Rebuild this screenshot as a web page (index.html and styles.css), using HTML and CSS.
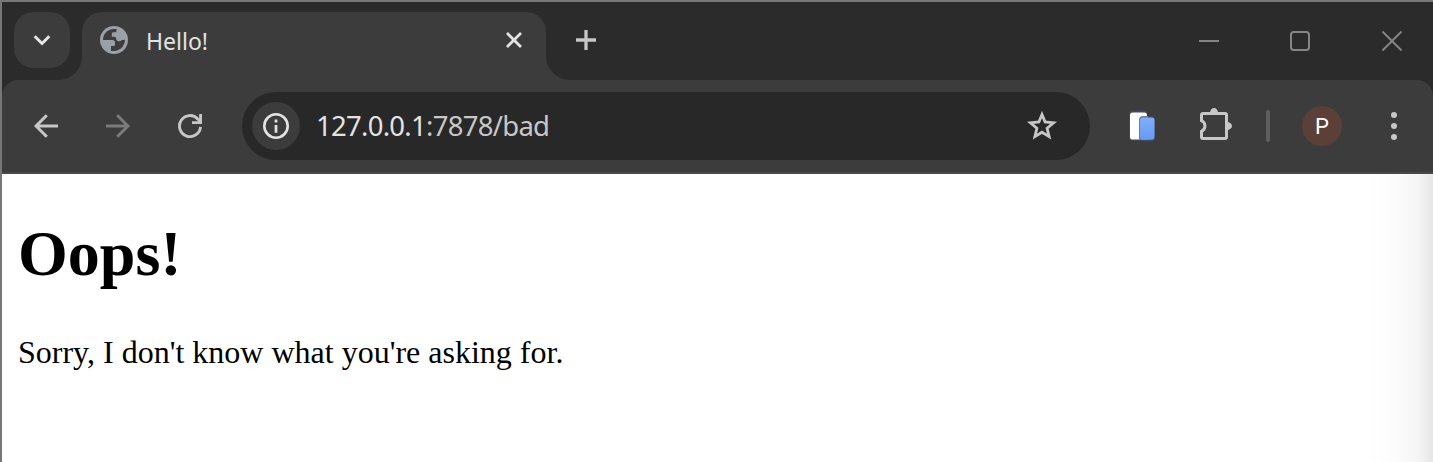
FILE: index.html
```html
<!DOCTYPE html>
<html lang="en">
<head>
<meta charset="utf-8">
<title>Hello!</title>
<link rel="stylesheet" href="styles.css">
</head>
<body>
<div class="window">
  <header class="tabstrip">
    <div class="tab-search">
      <svg width="20" height="14" viewBox="0 0 20 14"><path d="M2.7 3.2 10 10.5 17.3 3.2" fill="none" stroke="#e6e6e6" stroke-width="3"/></svg>
    </div>
    <div class="tab">
      <svg class="favicon" width="28" height="28" viewBox="0 0 28 28"><circle cx="14" cy="14" r="14" fill="#9aa0a6"/><path d="M3 14C3 7.5 8 3 14 3H16.5V5Q16.5 6.3 15 6.3H13Q11.8 6.3 11.8 8V10.8H14Q16.3 10.8 16.3 13V14Q18 15.6 20 15.2Q21.8 13.8 24.9 13.8C25 20 20 25 14 25H11V20H13.5Q15 20 15 18.5V16.5Q15 14 12.2 14Z" fill="#3c3c3c"/></svg>
      <span class="tab-title">Hello!</span>
      <svg class="tab-close" width="18" height="18" viewBox="0 0 18 18"><path d="M2 2 16 16M16 2 2 16" stroke="#e3e3e3" stroke-width="2.8"/></svg>
    </div>
    <svg class="new-tab" width="20" height="20" viewBox="0 0 20 20"><path d="M10 0V20M0 10H20" stroke="#c7c7c7" stroke-width="3.3"/></svg>
    <div class="controls">
      <svg width="20" height="20" viewBox="0 0 20 20"><path d="M0 10H20" stroke="#858585" stroke-width="2"/></svg>
      <svg width="20" height="20" viewBox="0 0 20 20"><rect x="1" y="1" width="18" height="18" rx="2.8" fill="none" stroke="#858585" stroke-width="2"/></svg>
      <svg class="window-close" width="20" height="20" viewBox="0 0 20 20"><path d="M.5.5 19.5 19.5M19.5.5.5 19.5" stroke="#858585" stroke-width="2"/></svg>
    </div>
  </header>
  <nav class="toolbar">
    <svg class="back" width="24" height="24" viewBox="0 0 24 24"><path d="M24 12H2.5M12.8 1.2 2 12 12.8 22.8" fill="none" stroke="#c7c7c7" stroke-width="3"/></svg>
    <svg class="forward" width="24" height="24" viewBox="0 0 24 24"><path d="M0 12H21.5M11.2 1.2 22 12 11.2 22.8" fill="none" stroke="#7b7b7b" stroke-width="3"/></svg>
    <svg class="reload" width="24" height="24" viewBox="0 0 24 24"><path d="M22.5 12.8A10.5 10.5 0 1 1 19.8 5L22.3 7.5M22.6 0V8.6H14" fill="none" stroke="#c7c7c7" stroke-width="2.9"/></svg>
    <div class="omnibox">
      <span class="site-info"><svg width="26" height="26" viewBox="0 0 26 26"><circle cx="13" cy="13" r="11.7" fill="none" stroke="#e3e3e3" stroke-width="2.6"/><path d="M13 12V19.7M13 6.6V9.4" stroke="#e3e3e3" stroke-width="2.7"/></svg></span>
      <span class="url"><span class="host">127.0.0.1</span>:7878/bad</span>
      <svg class="star" width="32" height="30" viewBox="0 0 32 30"><path d="M16 3.5 19.1 11 27.6 11.8 21.1 17.3 23.1 25.6 16 21.2 8.9 25.6 10.9 17.3 4.4 11.8 12.9 11Z" fill="none" stroke="#c7c7c7" stroke-width="2.8"/></svg>
    </div>
    <svg class="extension" width="28" height="34" viewBox="0 0 28 34"><rect x="1" y="2.5" width="18" height="30" rx="4" fill="#414962"/><rect x="11" y="8" width="16" height="25.5" rx="4" fill="#414962"/><rect x="2" y="4.4" width="17" height="27.2" rx="2.7" fill="#fff"/><path d="M11 32V12Q11 8 15 8H20V32Z" fill="#777c8c"/><rect x="12" y="9.4" width="14.5" height="22.4" rx="3" fill="url(#panel)"/><defs><linearGradient id="panel" x2="0" y2="1"><stop stop-color="#80aefa"/><stop offset="1" stop-color="#6799f0"/></linearGradient></defs></svg>
    <svg class="puzzle" width="32" height="32" viewBox="0 0 32 32"><path d="M3.2 5.5H25Q26.5 5.5 26.5 7V29Q26.5 30.5 25 30.5H3Q1.5 30.5 1.5 29V23.3A5.8 5.8 0 0 0 1.5 12.7V7Q1.5 5.5 3.2 5.5Z" fill="none" stroke="#c7c7c7" stroke-width="3"/><path d="M10 5A4 5 0 0 1 18 5ZM27 14A5 4 0 0 1 27 22Z" fill="#c7c7c7"/></svg>
    <span class="divider"></span>
    <span class="avatar">P</span>
    <svg class="menu" width="6" height="28" viewBox="0 0 6 28"><g fill="#c7c7c7"><circle cx="3" cy="3" r="3"/><circle cx="3" cy="14" r="3"/><circle cx="3" cy="25" r="3"/></g></svg>
  </nav>
  <main class="page">
    <h1 class="heading">Oops!</h1>
    <p class="message">Sorry, I don't know what you're asking for.</p>
  </main>
</div>
</body>
</html>
```
FILE: styles.css
```css
body { margin: 0; }
svg { display: block; flex: none; }
.window {
  box-sizing: border-box;
  width: 1433px;
  height: 462px;
  overflow: hidden;
  border: solid #777;
  border-width: 2px 0 0 2px;
  background: #2b2b2b;
  display: flex;
  flex-direction: column;
}
.tabstrip {
  flex: none;
  height: 78px;
  display: flex;
  align-items: flex-start;
  font-family: "Noto Sans", sans-serif;
}
.tab-search {
  width: 56px;
  height: 56px;
  margin: 10px 12px 0;
  border-radius: 20px;
  background: #3c3c3c;
  display: grid;
  place-items: center;
}
.tab {
  position: relative;
  box-sizing: border-box;
  width: 464px;
  height: 68px;
  margin-top: 10px;
  padding: 0 23px 12px 18px;
  border-radius: 20px 20px 0 0;
  background: #3c3c3c;
  display: flex;
  align-items: center;
}
.tab::before, .tab::after {
  content: "";
  position: absolute;
  bottom: 0;
  width: 24px;
  height: 24px;
}
.tab::before { left: -24px; background: radial-gradient(circle at 0 0, transparent 23.5px, #3c3c3c 24.5px); }
.tab::after { right: -24px; background: radial-gradient(circle at 100% 0, transparent 23.5px, #3c3c3c 24.5px); }
.tab-title {
  margin-left: 18px;
  padding-top: 2px;
  color: #e3e3e3;
  font-size: 23px;
  line-height: 32px;
}
.tab-close { margin-left: auto; }
.new-tab { margin: 28px 0 0 30px; }
.controls {
  margin: 29px 31px 0 auto;
  display: flex;
  gap: 71px;
}
.window-close { margin-left: 1px; }
.toolbar {
  box-sizing: border-box;
  flex: none;
  height: 94px;
  padding: 0 36px 0 32px;
  border-bottom: 2px solid #4a4748;
  border-radius: 16px 16px 0 0;
  background: #3c3c3c;
  display: flex;
  align-items: center;
}
.forward { margin-left: 48px; }
.reload { margin-left: 48px; }
.omnibox {
  box-sizing: border-box;
  width: 848px;
  height: 68px;
  margin-left: 40px;
  padding: 0 32px 0 10px;
  border-radius: 34px;
  background: #282828;
  display: flex;
  align-items: center;
}
.site-info {
  width: 48px;
  height: 48px;
  border-radius: 50%;
  background: #3c3c3c;
  display: grid;
  place-items: center;
}
.url {
  margin-left: 16px;
  color: #c7c7c7;
  font: 27.5px/40px "Noto Sans", sans-serif;
  letter-spacing: -0.72px;
  white-space: nowrap;
}
.host { color: #e3e3e3; }
.star { margin-left: auto; }
.extension { margin: -2px 0 0 38px; }
.puzzle { margin: -4px 0 0 44px; }
.divider {
  width: 4px;
  height: 32px;
  margin-left: 34px;
  border-radius: 2px;
  background: #5f5f5f;
}
.avatar {
  width: 40px;
  height: 40px;
  margin-left: 32px;
  border-radius: 50%;
  background: #5a4037;
  color: #fff;
  font: 22px/41px Roboto, sans-serif;
  text-align: center;
}
.menu { margin-left: auto; }
.page {
  flex: 1;
  padding: 0 16px;
  background: linear-gradient(90deg, #fff 1365px, #fcfcfc 1395px, #f5f5f5 1415px, #e6e6e6 1431px);
  color: #000;
  font-family: "Liberation Serif", serif;
}
.heading { margin: 43px 0 0; font-size: 64px; line-height: 74px; }
.message { margin: 43px 0 0; font-size: 32px; line-height: 37px; }
```
